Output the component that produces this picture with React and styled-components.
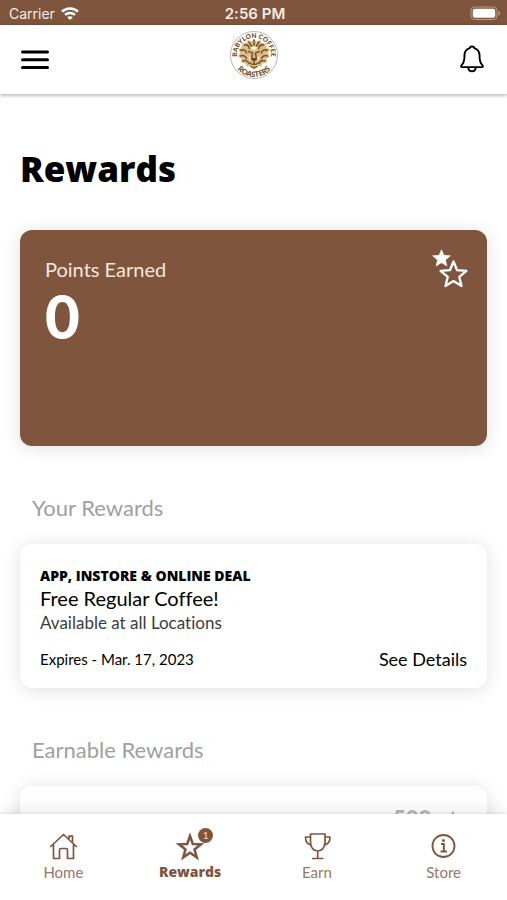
import React from "react";
import styled, { createGlobalStyle } from "styled-components";

const BROWN = "#7f563d";
const HEAVY_FONT = '"Open Sans", Lato, sans-serif';

const GlobalStyle = createGlobalStyle`
    * {
        box-sizing: border-box;
    }

    body {
        margin: 0;
        background: white;
        color: black;
        font-family: Lato, "Open Sans", sans-serif;
        font-variant-ligatures: none;
    }

    h1, h2, h3, p {
        margin: 0;
    }

    button {
        padding: 0;
        border: none;
        background: none;
        color: inherit;
        font: inherit;
        cursor: pointer;
    }
`;

const Screen = styled.div`
    display: flex;
    flex-direction: column;
    height: 100vh;
`;

const StatusBar = styled.div`
    display: grid;
    grid-template-columns: 1fr auto 1fr;
    align-items: center;
    flex: none;
    height: 25px;
    padding: 2px 6px 0 9px;
    background: ${BROWN};
    color: #f6ebe4;
    font-family: Inter, Roboto, sans-serif;
    font-size: 14px;
    line-height: 20px;

    & > time {
        font-size: 15px;
        font-weight: 600;
    }

    & > svg {
        justify-self: end;
    }
`;

const Carrier = styled.div`
    display: flex;
    align-items: center;
    gap: 6px;
`;

const Header = styled.header`
    display: grid;
    grid-template-columns: 1fr auto 1fr;
    align-items: center;
    flex: none;
    height: 69px;
    padding: 0 20px 0 21px;
    background: white;
    box-shadow: 0 1px 4px rgba(0, 0, 0, 0.36);
    z-index: 2;

    & > svg {
        margin-bottom: 10px;
    }
`;

const IconButton = styled.button`
    display: flex;
    justify-self: ${(props) => props.$side};
`;

const Main = styled.main`
    flex: 1;
    min-height: 0;
    overflow-y: auto;
    scrollbar-width: none;
    padding: 54px 20px 24px;
`;

const Title = styled.h1`
    font-family: ${HEAVY_FONT};
    font-size: 35px;
    font-weight: 800;
    line-height: 42px;
`;

const Card = styled.article`
    padding: 23px 20px 16px;
    border-radius: 12px;
    background: white;
    box-shadow: 0 2px 18px rgba(0, 0, 0, 0.12);
`;

const PointsCard = styled(Card)`
    display: flex;
    justify-content: space-between;
    align-items: flex-start;
    min-height: 216px;
    margin-top: 40px;
    padding: 19px 19px 20px 25px;
    background: ${BROWN};
    color: white;
`;

const PointsLabel = styled.h2`
    color: #f6e6dc;
    font-size: 20px;
    font-weight: 400;
    line-height: 40px;
`;

const PointsValue = styled.p`
    font-size: 60px;
    font-weight: 900;
    line-height: 54px;
`;

const SectionTitle = styled.h2`
    padding: 48px 12px 22px;
    color: #a0a0a0;
    font-size: 22px;
    font-weight: 400;
    line-height: 28px;
`;

const DealType = styled.p`
    font-family: ${HEAVY_FONT};
    font-size: 14px;
    font-weight: 800;
    line-height: 18px;
`;

const DealName = styled.h3`
    font-size: 20px;
    font-weight: 400;
    line-height: 27px;
`;

const DealPlace = styled.p`
    color: #3c3c3c;
    font-size: 17px;
    line-height: 22px;
`;

const DealFooter = styled.div`
    display: flex;
    justify-content: space-between;
    align-items: center;
    margin-top: 12px;
    font-size: 15px;
    line-height: 26px;

    & > button {
        font-size: 18px;
    }
`;

const PointsNeeded = styled.p`
    color: #b9b9b9;
    font-size: 22px;
    font-weight: 900;
    line-height: 20px;
    text-align: right;
`;

const TabBar = styled.nav`
    display: flex;
    flex: none;
    height: 86px;
    background: white;
    box-shadow: 0 -1px 18px rgba(0, 0, 0, 0.1), 0 -1px 2px rgba(0, 0, 0, 0.08);
    z-index: 2;
`;

const Tab = styled.a`
    display: flex;
    flex: 1;
    flex-direction: column;
    align-items: center;
    gap: 1px;
    padding-top: 17px;
    color: ${(props) => (props.$active ? BROWN : "#95786a")};
    font-family: ${(props) => (props.$active ? HEAVY_FONT : "inherit")};
    font-size: ${(props) => (props.$active ? "14px" : "15px")};
    font-weight: ${(props) => (props.$active ? 800 : 400)};
    line-height: 20px;
    text-decoration: none;
`;

const TabIcon = styled.span`
    position: relative;
    display: flex;
    color: ${BROWN};
`;

const Badge = styled.span`
    position: absolute;
    top: -3px;
    right: -8px;
    width: 15px;
    height: 15px;
    border-radius: 50%;
    background: ${BROWN};
    color: #f1ddd0;
    font-family: Lato, sans-serif;
    font-size: 10px;
    font-weight: 400;
    line-height: 15px;
    text-align: center;
`;

function WifiIcon() {
    return (
        <svg width="18" height="14" viewBox="0 0 18 14" fill="none" stroke="#fff" strokeWidth="2.5" aria-hidden="true">
            <path d="M1 4.700C5.400.4 12.600.4 17 4.700" />
            <path d="M4 7.900c2.800-2.600 7.200-2.600 10 0" />
            <path d="M9 13.100L6.200 10.300c1.600-1.300 4-1.300 5.600 0z" fill="#fff" stroke="none" />
        </svg>
    );
}

function BatteryIcon() {
    return (
        <svg width="31" height="15" viewBox="0 0 31 15" aria-hidden="true">
            <rect x="1" y="1" width="26" height="12.5" rx="3.6" fill="none" stroke="#b79b8b" />
            <rect x="2.8" y="2.8" width="22.4" height="9" rx="2" fill="#fff" />
            <path d="M28.5 5v4.5c2-.7 2-3.8 0-4.5z" fill="#b79b8b" />
        </svg>
    );
}

function MenuIcon() {
    return (
        <svg width="28" height="20" viewBox="0 0 28 20" stroke="#000" strokeWidth="3" strokeLinecap="round" aria-hidden="true">
            <path d="M1.500 2h25M1.500 9.800h25M1.500 17.600h25" />
        </svg>
    );
}

function BellIcon() {
    return (
        <svg width="30" height="32" viewBox="0 0 30 32" fill="none" stroke="#000" strokeWidth="1.900" strokeLinejoin="round" aria-hidden="true">
            <path d="M12.700 4.200c.2-2.200 4.400-2.200 4.600 0 3.800 1.200 5.200 4 5.200 7.300 0 5 .5 7.600 3 9.900.8.800.4 1.700-.6 1.700H5.100c-1 0-1.400-.9-.6-1.700 2.500-2.300 3-4.900 3-9.900 0-3.300 1.400-6.100 5.200-7.300z" />
            <path d="M11.200 23.200c.2 5.400 7.400 5.400 7.600 0" />
        </svg>
    );
}

function Logo() {
    return (
        <svg width="50" height="50" viewBox="0 0 100 100" role="img" aria-label="Babylon Coffee Roasters">
            <defs>
                <path id="logo-top" d="M19 64A34 34 0 1 1 81 64" />
                <path id="logo-bottom" d="M6 50A44 44 0 0 0 94 50" />
            </defs>
            <circle cx="50" cy="50" r="47" fill="#fff" stroke="#bdb8b4" strokeWidth="2" />
            <g fill="#6b4a1c" fontFamily="Lato" fontWeight="900">
                <text textAnchor="middle" fontSize="13">
                    <textPath href="#logo-top" startOffset="50%">BABYLON COFFEE</textPath>
                </text>
                <text textAnchor="middle" fontSize="15">
                    <textPath href="#logo-bottom" startOffset="50%">ROASTERS</textPath>
                </text>
            </g>
            <path
                d="M50 18l5 5 8-3 2 6 10 1-1 7 8 5-5 6 5 8-7 4 1 8-8 1-4 7-7-1-7 8-7-8-7 1-4-7-8-1 1-8-7-4 5-8-5-6 8-5-1-7 10-1 2-6 8 3z"
                fill="#d9bd8d"
            />
            <g fill="none" stroke="#80551b" strokeWidth="3" strokeLinecap="round">
                <path d="M50 20v11M40 24l6 10M60 24l-6 10M31 30c5-1 9 2 10 7M69 30c-5-1-9 2-10 7M23 41c6-3 12 0 12 5M77 41c-6-3-12 0-12 5M23 52c5-2 11 0 12 5M77 52c-5-2-11 0-12 5M28 62c5-2 10 0 12 5M72 62c-5-2-10 0-12 5" />
                <path d="M39 43l8 3M61 43l-8 3M47 47l-2 11 5 4 5-4-2-11M50 62v5M42 66c4 4 12 4 16 0M44 73c4 3 8 3 12 0" />
            </g>
            <path d="M42 35l8-3 8 3-8 6zM39 53l5 2-3 6zM61 53l-5 2 3 6z" fill="#fbf5ea" />
            <path d="M45 56h10l-5 6z" fill="#684315" />
        </svg>
    );
}

function PointsStars() {
    return (
        <svg width="36" height="40" viewBox="0 0 36 40" aria-hidden="true">
            <path d="M9.500 0l2.600 6 6.900.6-5.200 4.500 1.500 6.400-5.800-3.400-5.800 3.400 1.500-6.400L0 6.600 6.900 6z" fill="#fff" />
            <path
                d="M21.500 12.500l3.600 8.700 9.300.7-7.100 6 2.200 9.100-8-4.900-8 4.900 2.200-9.100-7.100-6 9.300-.7z"
                fill={BROWN}
                stroke="#fff"
                strokeWidth="2.300"
                strokeLinejoin="round"
            />
        </svg>
    );
}

function HomeIcon() {
    return (
        <svg width="30" height="30" viewBox="0 0 30 30" fill="none" stroke="currentColor" strokeWidth="1.700" strokeLinejoin="round" strokeLinecap="round" aria-hidden="true">
            <path d="M2.700 15.500L15.500 3.500l12.800 12M5.500 13.500v14h6V19c0-1 .5-1.500 1.500-1.500h5c1 0 1.500.5 1.500 1.500v8.500h6v-14M21 8V5.200h3.500V12" />
        </svg>
    );
}

function StarIcon() {
    return (
        <svg width="30" height="30" viewBox="0 0 30 30" fill="none" stroke="currentColor" strokeWidth="2.500" aria-hidden="true">
            <path d="M15 5l2.800 8 8.200.3-6.500 5.100 2.300 8-6.800-4.700-6.800 4.700 2.300-8L4 13.300l8.200-.3z" />
        </svg>
    );
}

function TrophyIcon() {
    return (
        <svg width="30" height="30" viewBox="0 0 30 30" fill="none" stroke="currentColor" strokeWidth="1.700" strokeLinejoin="round" strokeLinecap="round" aria-hidden="true">
            <path d="M8.500 3h14.500v8.500c0 5-3.200 8.500-7.250 8.500S8.500 16.500 8.500 11.500zM8.500 6H3.500c0 5 1.500 7.500 6 8M23 6h5c0 5-1.500 7.500-6 8M15.700 20v7.500M10.700 27.500h10" />
        </svg>
    );
}

function InfoIcon() {
    return (
        <svg width="30" height="30" viewBox="0 0 30 30" fill="none" stroke="currentColor" strokeWidth="1.800" aria-hidden="true">
            <circle cx="14.500" cy="15" r="11" />
            <path d="M12 13h2.800v7M11.500 20.500H18" strokeWidth="2" />
            <circle cx="14.500" cy="9.500" r="1.500" fill="currentColor" stroke="none" />
        </svg>
    );
}

const tabs = [
    { name: "Home", icon: <HomeIcon /> },
    { name: "Rewards", icon: <StarIcon />, active: true, count: 1 },
    { name: "Earn", icon: <TrophyIcon /> },
    { name: "Store", icon: <InfoIcon /> },
];

function App() {
    return (
        <Screen>
            <GlobalStyle />
            <StatusBar>
                <Carrier>
                    Carrier
                    <WifiIcon />
                </Carrier>
                <time>2:56 PM</time>
                <BatteryIcon />
            </StatusBar>
            <Header>
                <IconButton $side="start" aria-label="Menu">
                    <MenuIcon />
                </IconButton>
                <Logo />
                <IconButton $side="end" aria-label="Notifications">
                    <BellIcon />
                </IconButton>
            </Header>
            <Main>
                <Title>Rewards</Title>
                <PointsCard>
                    <div>
                        <PointsLabel>Points Earned</PointsLabel>
                        <PointsValue>0</PointsValue>
                    </div>
                    <PointsStars />
                </PointsCard>
                <SectionTitle>Your Rewards</SectionTitle>
                <Card>
                    <DealType>APP, INSTORE &amp; ONLINE DEAL</DealType>
                    <DealName>Free Regular Coffee!</DealName>
                    <DealPlace>Available at all Locations</DealPlace>
                    <DealFooter>
                        <span>Expires - Mar. 17, 2023</span>
                        <button>See Details</button>
                    </DealFooter>
                </Card>
                <SectionTitle>Earnable Rewards</SectionTitle>
                <Card>
                    <PointsNeeded>500 pts</PointsNeeded>
                </Card>
            </Main>
            <TabBar>
                {tabs.map((tab) => (
                    <Tab key={tab.name} href={`#${tab.name.toLowerCase()}`} $active={tab.active} aria-current={tab.active ? "page" : undefined}>
                        <TabIcon>
                            {tab.icon}
                            {tab.count && <Badge>{tab.count}</Badge>}
                        </TabIcon>
                        {tab.name}
                    </Tab>
                ))}
            </TabBar>
        </Screen>
    );
}

export default App;
